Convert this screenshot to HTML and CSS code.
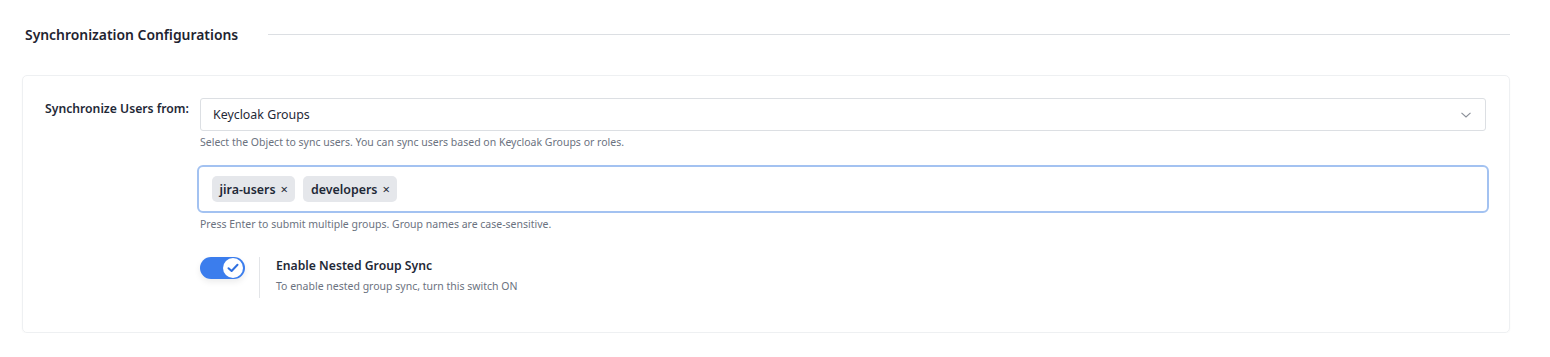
FILE: index.html
```html
<!DOCTYPE html>
<html lang="en">
<head>
<meta charset="utf-8">
<title>Synchronization Configurations</title>
<link rel="stylesheet" href="styles.css">
</head>
<body>
<div class="page">
  <div class="section-head">
    <h2 class="section-title">Synchronization Configurations</h2>
    <div class="section-rule"></div>
  </div>
  <div class="card">
    <div class="row">
      <label class="row-label">Synchronize Users from:</label>
      <div class="row-body">
        <div class="select">
          <span class="select-value">Keycloak Groups</span>
          <svg class="chevron" width="12" height="8" viewBox="0 0 12 8"><path d="M1.5 1.8 L6 6 L10.5 1.8" fill="none" stroke="#8a8f98" stroke-width="1.1"/></svg>
        </div>
        <p class="help">Select the Object to sync users. You can sync users based on Keycloak Groups or roles.</p>
        <div class="tag-input">
          <span class="tag">jira-users <span class="tag-x">×</span></span>
          <span class="tag">developers <span class="tag-x">×</span></span>
        </div>
        <p class="help">Press Enter to submit multiple groups. Group names are case-sensitive.</p>
        <div class="switch-row">
          <div class="switch">
            <div class="knob">
              <svg width="12" height="10" viewBox="0 0 12 10"><path d="M1.5 5.2 L4.6 8 L10.5 1.8" fill="none" stroke="#2f6fe0" stroke-width="2" stroke-linecap="round" stroke-linejoin="round"/></svg>
            </div>
          </div>
          <div class="switch-text">
            <div class="switch-title">Enable Nested Group Sync</div>
            <div class="switch-sub">To enable nested group sync, turn this switch ON</div>
          </div>
        </div>
      </div>
    </div>
  </div>
</div>
</body>
</html>
```
FILE: styles.css
```css
* { box-sizing: border-box; }
html, body { margin: 0; padding: 0; background: #fff; }
body {
  font-family: "Noto Sans", "Open Sans", sans-serif;
  color: #1f2937;
}
.page {
  padding: 22px 40px 0 22px;
}
.section-head {
  display: flex;
  align-items: center;
  gap: 30px;
  padding-left: 3px;
  height: 24px;
}
.section-title {
  margin: 0;
  font-size: 13.9px;
  font-weight: 600;
  color: #1f2430;
  white-space: nowrap;
}
.section-rule {
  flex: 1;
  height: 1px;
  background: #dcdfe3;
}
.card {
  margin-top: 29px;
  border: 1px solid #eef0f2;
  border-radius: 5px;
  box-shadow: 0 1px 2px rgba(0,0,0,0.03);
  padding: 22px 23px 34px 22px;
}
.row {
  display: flex;
  align-items: flex-start;
}
.row-label {
  width: 154px;
  flex: none;
  font-size: 12.2px;
  font-weight: 600;
  color: #1f2937;
  padding-top: 2px;
}
.row-body { flex: 1; }
.select {
  height: 33px;
  border: 1px solid #dcdfe3;
  border-radius: 3px;
  display: flex;
  align-items: center;
  justify-content: space-between;
  padding: 0 13px 0 12px;
  margin-left: 1px;
}
.select-value { font-size: 12.4px; color: #1f2937; }
.chevron { display: block; }
.help {
  margin: 3px 0 0 1px;
  font-size: 10.5px;
  color: #6b7280;
  line-height: 16px;
}
.tag-input {
  margin-top: 15px;
  margin-left: -2px;
  margin-right: -3px;
  height: 48px;
  border: 2.5px solid #a3c2f1;
  border-radius: 6px;
  display: flex;
  align-items: center;
  gap: 8px;
  padding: 0 12.5px;
}
.tag {
  height: 26px;
  display: inline-flex;
  align-items: center;
  background: #e5e7eb;
  border-radius: 5px;
  padding: 0 7px 0 8px;
  font-size: 12.4px;
  font-weight: 600;
  color: #1f2937;
}
.tag-x {
  margin-left: 5px;
  font-weight: 400;
  font-size: 13px;
}
.switch-row {
  display: flex;
  margin-top: 25px;
  margin-left: 1px;
}
.switch {
  width: 45px;
  height: 22px;
  background: #3b7ded;
  border-radius: 11px;
  position: relative;
  flex: none;
  box-shadow: 0 3px 6px rgba(0,0,0,0.08);
}
.knob {
  position: absolute;
  right: 2px;
  top: 1px;
  width: 20px;
  height: 20px;
  border-radius: 50%;
  background: #fff;
  display: flex;
  align-items: center;
  justify-content: center;
}
.switch-text {
  margin-left: 14px;
  border-left: 1px solid #e3e5e8;
  padding-left: 16px;
  height: 41px;
}
.switch-title {
  font-size: 12.2px;
  font-weight: 600;
  color: #1f2937;
  line-height: 18px;
}
.switch-sub {
  margin-top: 4px;
  font-size: 10.5px;
  color: #6b7280;
}
```
